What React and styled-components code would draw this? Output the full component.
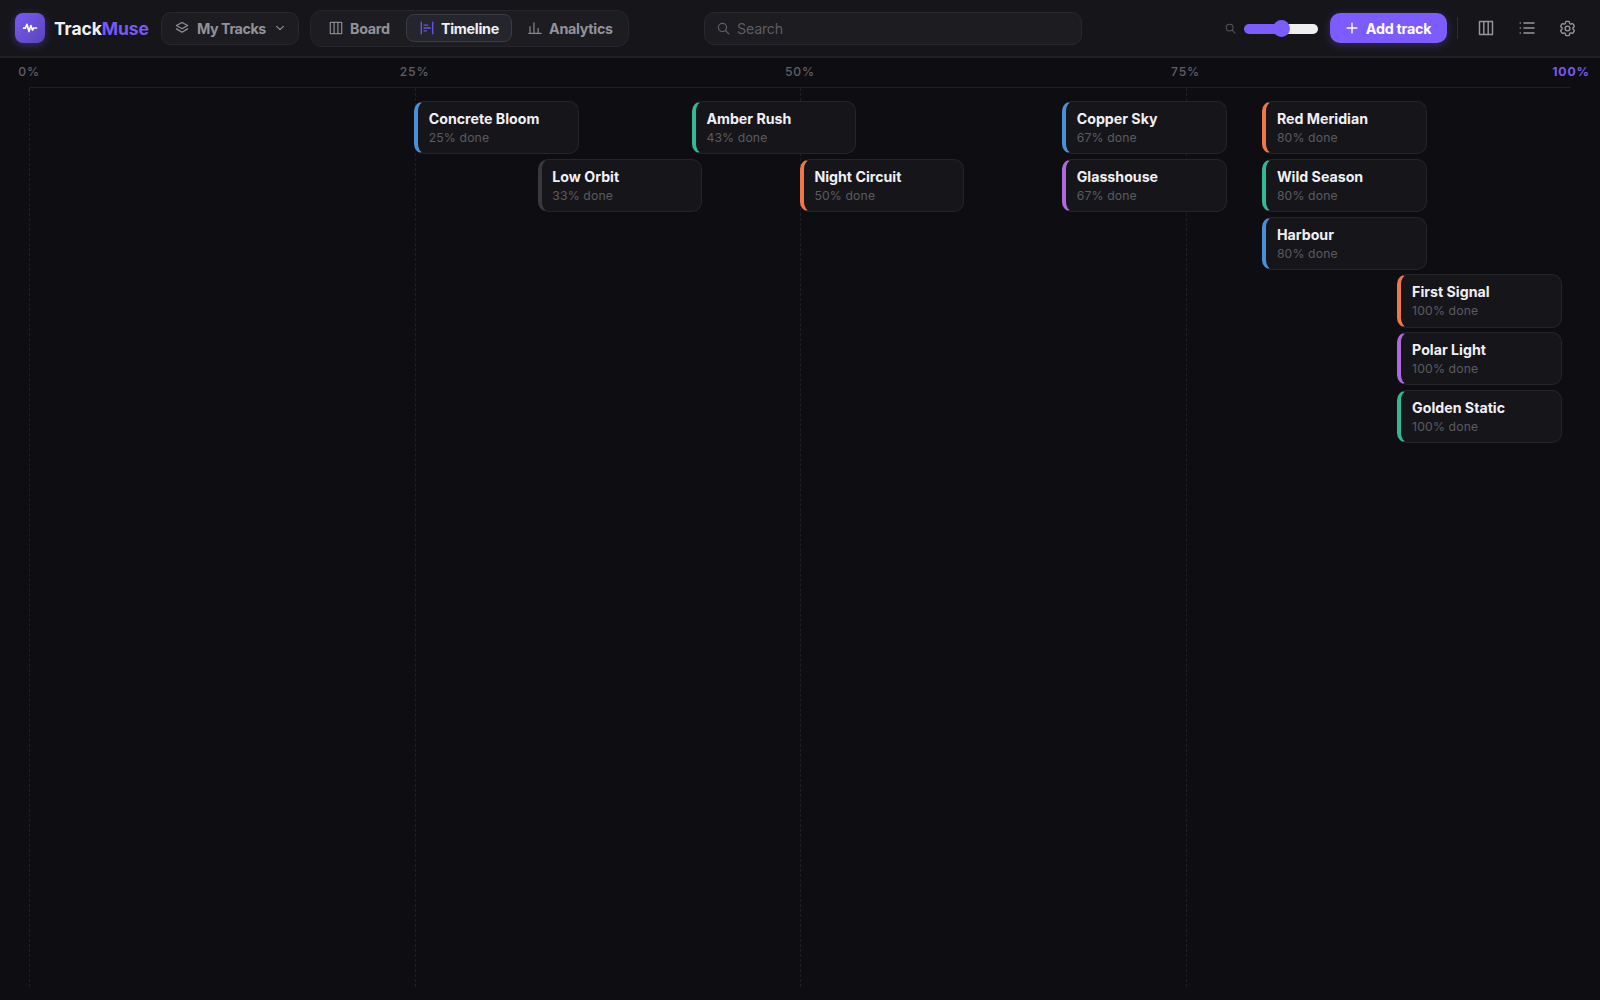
import React from "react";
import styled, { createGlobalStyle } from "styled-components";

const Global = createGlobalStyle`
  * { box-sizing: border-box; }
  html, body { margin: 0; background: #0e0e12; overflow: hidden; }
  body, button, input { font-family: Inter, "Liberation Sans", sans-serif; }
`;

const Page = styled.div`
  height: 100vh;
  display: flex;
  flex-direction: column;
  background: #0e0e12;
  color: #f0f0f4;
`;

const Header = styled.header`
  height: 58px;
  flex: none;
  display: grid;
  grid-template-columns: 704px 378px 1fr;
  align-items: center;
  background: #16161a;
  border-bottom: 2px solid #212126;
`;

const Left = styled.div`
  display: flex;
  align-items: center;
  padding-left: 15px;
`;

const Logo = styled.div`
  width: 30px;
  height: 30px;
  border-radius: 8px;
  background: linear-gradient(135deg, #775af5, #5b44b8);
  box-shadow: 0 2px 8px rgba(124, 92, 255, 0.35);
  display: flex;
  align-items: center;
  justify-content: center;
  color: #fff;
`;

const Brand = styled.div`
  width: 107px;
  margin-left: 9px;
  font-size: 17.5px;
  font-weight: 700;
  letter-spacing: -0.1px;
  white-space: nowrap;
  span { color: #7759f6; }
`;

const Picker = styled.button`
  width: 138px;
  height: 33px;
  padding: 0 13px;
  display: flex;
  align-items: center;
  border: 1px solid #28282e;
  border-radius: 10px;
  background: #1c1c21;
  color: #92929b;
  font-size: 14.3px;
  font-weight: 650;
  letter-spacing: -0.45px;
  white-space: nowrap;
  span { margin-left: 8px; flex: 1; text-align: left; }
`;

const Tabs = styled.nav`
  width: 319px;
  height: 37px;
  margin-left: 11px;
  padding: 3px;
  display: flex;
  align-items: center;
  border: 1px solid #25252b;
  border-radius: 12px;
  background: #1c1c21;
`;

const Tab = styled.button`
  width: ${(p) => p.$width}px;
  height: 28px;
  padding: 0 0 0 ${(p) => p.$inset || 14}px;
  display: flex;
  align-items: center;
  gap: 7px;
  border: 1px solid ${(p) => (p.$active ? "#3b3b44" : "transparent")};
  border-radius: 8px;
  background: ${(p) => (p.$active ? "#25252d" : "transparent")};
  color: ${(p) => (p.$active ? "#f0f0f4" : "#92929b")};
  font-size: 14.3px;
  font-weight: 650;
  letter-spacing: -0.28px;
  svg { color: ${(p) => (p.$active ? "#6a52e0" : "#85858d")}; }
`;

const SearchBox = styled.label`
  height: 33px;
  padding: 0 12px;
  display: flex;
  align-items: center;
  gap: 7px;
  border: 1px solid #28282e;
  border-radius: 10px;
  background: #1c1c21;
  color: #5f626d;
`;

const SearchInput = styled.input`
  flex: 1;
  padding: 0;
  border: 0;
  outline: 0;
  background: transparent;
  color: #f0f0f4;
  font-size: 14.3px;
  letter-spacing: -0.25px;
  &::placeholder { color: #5b5b63; opacity: 1; }
`;

const Right = styled.div`
  display: flex;
  align-items: center;
  justify-content: flex-end;
  padding-right: 16px;
`;

const ZoomIcon = styled.span`
  display: flex;
  margin-right: 8px;
  color: #54545c;
`;

const Track = styled.div`
  width: 74px;
  height: 10px;
  margin-top: 1px;
  border-radius: 5px;
  display: flex;
  align-items: center;
  justify-content: center;
  background: linear-gradient(90deg, #7c5cff 50%, #efefef 50%);
`;

const Thumb = styled.div`
  width: 17px;
  height: 17px;
  flex: none;
  border-radius: 50%;
  background: #7c5cff;
`;

const AddButton = styled.button`
  width: 117px;
  height: 30px;
  margin-left: 12px;
  padding: 0;
  display: flex;
  align-items: center;
  justify-content: center;
  gap: 8px;
  border: 0;
  border-radius: 10px;
  background: #7c5cff;
  box-shadow: 0 2px 10px rgba(124, 92, 255, 0.3);
  color: #fff;
  font-size: 14.3px;
  font-weight: 650;
  letter-spacing: -0.25px;
  white-space: nowrap;
`;

const Divider = styled.div`
  width: 1px;
  height: 22px;
  margin: 0 11px 0 10px;
  background: #2c2c33;
`;

const IconButton = styled.button`
  width: 33px;
  height: 33px;
  padding: 0;
  & + & { margin-left: 8px; }
  display: flex;
  align-items: center;
  justify-content: center;
  border: 0;
  background: transparent;
  color: #96969c;
`;

const Axis = styled.div`
  height: 30px;
  flex: none;
  margin: 0 29px;
  border-bottom: 1px solid #1f1f24;
  display: flex;
  justify-content: space-between;
`;

const Tick = styled.div`
  width: 0;
  height: 26px;
  display: flex;
  align-items: center;
  justify-content: center;
  white-space: nowrap;
  font-size: 12.2px;
  font-weight: ${(p) => (p.$end ? 700 : 450)};
  letter-spacing: 0.85px;
  color: ${(p) => (p.$end ? "#7759f6" : "#5e5e66")};
`;

const Canvas = styled.main`
  position: relative;
  flex: 1;
  margin: 0 29px 13px;
`;

const Guide = styled.div`
  position: absolute;
  top: 0;
  bottom: 0;
  left: ${(p) => p.$at}%;
  border-left: 1px dashed #1f1f24;
`;

const Card = styled.article`
  position: absolute;
  left: ${(p) => p.$x}px;
  top: ${(p) => 13 + p.$row * 57.75}px;
  width: 164.6px;
  height: 53.4px;
  padding: 7px 10.7px;
  border: 1px solid #242429;
  border-left: 4px solid ${(p) => p.$color};
  border-radius: 10px;
  background: #16161a;
`;

const Title = styled.div`
  font-size: 14.2px;
  line-height: 19px;
  font-weight: 650;
  white-space: nowrap;
`;

const Progress = styled.div`
  margin-top: 2px;
  font-size: 12.2px;
  line-height: 16px;
  letter-spacing: 0.15px;
  color: #5a5a62;
`;

const Svg = ({ size = 16, width = 1.5, box = 16, children }) => (
  <svg width={size} height={size} viewBox={`0 0 ${box} ${box}`} fill="none" stroke="currentColor" strokeWidth={width} strokeLinecap="round" strokeLinejoin="round">
    {children}
  </svg>
);

const Pulse = () => (
  <Svg size={16} width={1.7}><path d="M1.6 8.2h1.7L5 4.4l2 7.2 1.9-6 1.6 4.4 1.3-2h2.7" /></Svg>
);
const Layers = () => (
  <Svg size={14} width={1.35}><path d="M8 1.6 14.4 5.2 8 8.8 1.6 5.2zM1.6 9 8 12.8 14.4 9" /></Svg>
);
const Chevron = () => (
  <Svg size={10} width={1.8}><path d="m2.6 5.5 5.4 5 5.4-5" /></Svg>
);
const Columns = ({ size }) => (
  <Svg size={size} width={1.45}><path d="M1.5 1.5h13v13h-13zM5.8 1.5v13M10.2 1.5v13" /></Svg>
);
const TimelineIcon = () => (
  <Svg size={14} width={1.6}><path d="M1.5 1.5v13M14.5 1.5v13M4.6 4.7h4.2M4.6 8h7.2M4.6 11.3h2.6" /></Svg>
);
const Bars = () => (
  <Svg size={14} width={1.4}><path d="M1 14.2h14M2.3 14V6.4M6.8 14V2M11.6 14V8.4" /></Svg>
);
const Search = ({ size }) => (
  <Svg size={size} width={1.5}><circle cx="6.7" cy="6.7" r="5" /><path d="m10.4 10.4 4.2 4.2" /></Svg>
);
const List = () => (
  <Svg size={16} width={1.5}><path d="M5 3h10M5 8h10M5 13h10M1.2 3h.1M1.2 8h.1M1.2 13h.1" /></Svg>
);
const Plus = () => (
  <Svg size={12} width={1.8}><path d="M8 1.5v13M1.5 8h13" /></Svg>
);
const Gear = () => (
  <Svg size={19} width={1.7} box={24}>
    <path d="M9.594 3.94c.09-.542.56-.94 1.11-.94h2.593c.55 0 1.02.398 1.11.94l.213 1.281c.063.374.313.686.645.87.074.04.147.083.22.127.325.196.72.257 1.075.124l1.217-.456a1.125 1.125 0 0 1 1.37.49l1.296 2.247a1.125 1.125 0 0 1-.26 1.431l-1.003.827c-.293.241-.438.613-.43.992a7.723 7.723 0 0 1 0 .255c-.008.378.137.75.43.991l1.004.827c.424.35.534.955.26 1.43l-1.298 2.247a1.125 1.125 0 0 1-1.369.491l-1.217-.456c-.355-.133-.75-.072-1.076.124a6.47 6.47 0 0 1-.22.128c-.331.183-.581.495-.644.869l-.213 1.281c-.09.543-.56.94-1.11.94h-2.594c-.55 0-1.019-.398-1.11-.94l-.213-1.281c-.062-.374-.312-.686-.644-.87a6.52 6.52 0 0 1-.22-.127c-.325-.196-.72-.257-1.076-.124l-1.217.456a1.125 1.125 0 0 1-1.369-.49l-1.297-2.247a1.125 1.125 0 0 1 .26-1.431l1.004-.827c.292-.24.437-.613.43-.991a6.932 6.932 0 0 1 0-.255c.007-.38-.138-.751-.43-.992l-1.004-.827a1.125 1.125 0 0 1-.26-1.43l1.297-2.247a1.125 1.125 0 0 1 1.37-.491l1.216.456c.356.133.751.072 1.076-.124.072-.044.146-.086.22-.128.332-.183.582-.495.644-.869z" />
    <circle cx="12" cy="12" r="3" />
  </Svg>
);

const BLUE = "#4a90d9";
const GREEN = "#34b795";
const ORANGE = "#f07848";
const PURPLE = "#b068e0";

const tracks = [
  { name: "Concrete Bloom", done: 25, x: 385, row: 0, color: BLUE },
  { name: "Amber Rush", done: 43, x: 662.7, row: 0, color: GREEN },
  { name: "Copper Sky", done: 67, x: 1033, row: 0, color: BLUE },
  { name: "Red Meridian", done: 80, x: 1233.2, row: 0, color: ORANGE },
  { name: "Low Orbit", done: 33, x: 508.6, row: 1, color: "#38383d" },
  { name: "Night Circuit", done: 50, x: 770.7, row: 1, color: ORANGE },
  { name: "Glasshouse", done: 67, x: 1033, row: 1, color: PURPLE },
  { name: "Wild Season", done: 80, x: 1233.2, row: 1, color: GREEN },
  { name: "Harbour", done: 80, x: 1233.2, row: 2, color: BLUE },
  { name: "First Signal", done: 100, x: 1368.4, row: 3, color: ORANGE },
  { name: "Polar Light", done: 100, x: 1368.4, row: 4, color: PURPLE },
  { name: "Golden Static", done: 100, x: 1368.4, row: 5, color: GREEN },
];

export default function App() {
  return (
    <Page>
      <Global />
      <Header>
        <Left>
          <Logo><Pulse /></Logo>
          <Brand>Track<span>Muse</span></Brand>
          <Picker><Layers /><span>My Tracks</span><Chevron /></Picker>
          <Tabs>
            <Tab $width={92}><Columns size={14} />Board</Tab>
            <Tab $width={106} $inset={13} $active><TimelineIcon />Timeline</Tab>
            <Tab $width={113} $inset={15}><Bars />Analytics</Tab>
          </Tabs>
        </Left>
        <SearchBox><Search size={13} /><SearchInput placeholder="Search" /></SearchBox>
        <Right>
          <ZoomIcon><Search size={11} /></ZoomIcon>
          <Track><Thumb /></Track>
          <AddButton><Plus />Add track</AddButton>
          <Divider />
          <IconButton><Columns size={16} /></IconButton>
          <IconButton><List /></IconButton>
          <IconButton><Gear /></IconButton>
        </Right>
      </Header>
      <Axis>
        {[0, 25, 50, 75, 100].map((n) => <Tick key={n} $end={n === 100}>{n}%</Tick>)}
      </Axis>
      <Canvas>
        {[0, 25, 50, 75].map((n) => <Guide key={n} $at={n} />)}
        {tracks.map((t) => (
          <Card key={t.name} $x={t.x} $row={t.row} $color={t.color}>
            <Title>{t.name}</Title>
            <Progress>{t.done}% done</Progress>
          </Card>
        ))}
      </Canvas>
    </Page>
  );
}
